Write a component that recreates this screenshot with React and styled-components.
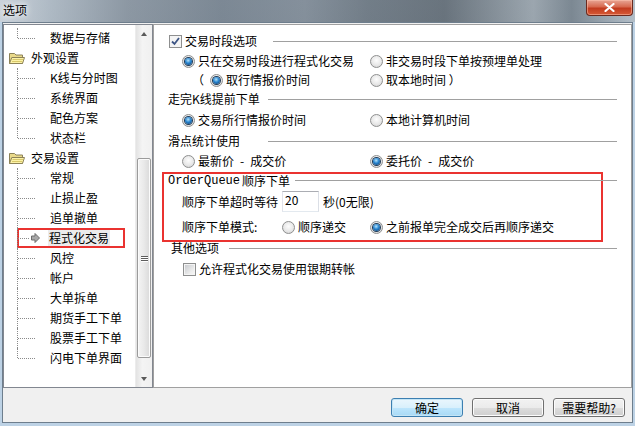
import React from 'react'
import styled, { createGlobalStyle } from 'styled-components'

const GlobalStyle = createGlobalStyle`
  html, body {
    margin: 0;
    padding: 0;
  }
  body {
    font-family: "Noto Sans CJK SC", "Liberation Sans", sans-serif;
    font-size: 12px;
    line-height: 14px;
    color: #000;
  }
`

const treeItems = [
  { label: '数据与存储', last: true },
  { label: '外观设置', folder: true },
  { label: 'K线与分时图' },
  { label: '系统界面' },
  { label: '配色方案' },
  { label: '状态栏', last: true },
  { label: '交易设置', folder: true },
  { label: '常规' },
  { label: '止损止盈' },
  { label: '追单撤单' },
  { label: '程式化交易', selected: true },
  { label: '风控' },
  { label: '帐户' },
  { label: '大单拆单' },
  { label: '期货手工下单' },
  { label: '股票手工下单' },
  { label: '闪电下单界面', last: true },
]

const FolderIcon = () => (
  <svg width="16" height="13" viewBox="0 0 16 13">
    <path d="M0.5 1.5 H5.5 L7 3 H13.5 V11.5 H0.5 Z" fill="#e9d98a" stroke="#8c8258" />
    <path d="M0.5 11.5 L2.8 5.5 H15.5 L13.5 11.5 Z" fill="#fcf2a8" stroke="#8c8258" />
    <path d="M3.5 7.5 H14 M3 9.5 H13.3" stroke="#d8c86a" />
  </svg>
)

const PointerIcon = () => (
  <svg width="9" height="10" viewBox="0 0 9 10">
    <path d="M0.5 3 H4 V0.5 L8.5 5 L4 9.5 V7 H0.5 Z" fill="#a8a8a8" stroke="#6c6c6c" />
  </svg>
)

const CheckMark = () => (
  <svg width="9" height="9" viewBox="0 0 9 9">
    <path d="M1 4.5 L3.5 7 L8 1" fill="none" stroke="#3d5585" strokeWidth="1.8" />
  </svg>
)

const CloseGlyph = () => (
  <svg width="11" height="9" viewBox="0 0 11 9">
    <path d="M1.5 1 L9.5 8 M9.5 1 L1.5 8" stroke="#fff" strokeWidth="2.2" strokeLinecap="round" />
  </svg>
)

const App = () => {
  return (
    <>
      <GlobalStyle />
      <Window>
        <TitleBar>
          <Title>选项</Title>
          <CloseButton>
            <CloseGlyph />
          </CloseButton>
        </TitleBar>
        <Client>
          <Panels>
            <TreePanel>
              <TreeList>
                {treeItems.map((item) =>
                  item.folder ? (
                    <TreeRow key={item.label} $folder>
                      <FolderIcon />
                      <TreeLabel>{item.label}</TreeLabel>
                    </TreeRow>
                  ) : (
                    <TreeRow key={item.label}>
                      <Branch $marked={item.selected}>
                        <Connector $w={item.selected ? 14 : 20} $last={item.last} />
                        {item.selected && <PointerIcon />}
                        <TreeLabel $child $selected={item.selected}>
                          {item.label}
                        </TreeLabel>
                      </Branch>
                    </TreeRow>
                  )
                )}
              </TreeList>
              <ScrollBar>
                <ArrowButton>
                  <Triangle $up />
                </ArrowButton>
                <Track>
                  <Thumb $offset={116} $size={200}>
                    <Grip />
                    <Grip />
                    <Grip />
                  </Thumb>
                </Track>
                <ArrowButton>
                  <Triangle />
                </ArrowButton>
              </ScrollBar>
            </TreePanel>

            <Content>
              <Header $h={20}>
                <HeaderLabel $w={105}>
                  <CheckBox $checked>
                    <CheckMark />
                  </CheckBox>
                  交易时段选项
                </HeaderLabel>
                <Rule />
              </Header>
              <OptionRow $h={20}>
                <Option>
                  <Radio $checked />
                  只在交易时段进行程式化交易
                </Option>
                <Option>
                  <Radio />
                  非交易时段下单按预埋单处理
                </Option>
              </OptionRow>
              <OptionRow $h={18}>
                <Option>
                  <Paren>（</Paren>
                  <Radio $checked />
                  取行情报价时间
                </Option>
                <Option>
                  <Radio />
                  取本地时间 ）
                </Option>
              </OptionRow>

              <Header $h={20}>
                <HeaderLabel $w={100}>走完K线提前下单</HeaderLabel>
                <Rule />
              </Header>
              <OptionRow $h={22}>
                <Option>
                  <Radio $checked />
                  交易所行情报价时间
                </Option>
                <Option>
                  <Radio />
                  本地计算机时间
                </Option>
              </OptionRow>

              <Header $h={20}>
                <HeaderLabel $w={100}>滑点统计使用</HeaderLabel>
                <Rule />
              </Header>
              <OptionRow $h={20}>
                <Option>
                  <Radio />
                  最新价&ensp;-&ensp;成交价
                </Option>
                <Option>
                  <Radio $checked />
                  委托价&ensp;-&ensp;成交价
                </Option>
              </OptionRow>

              <MarkedGroup>
                <Header $h={13}>
                  <HeaderLabel $w={127}>
                    <Mono>OrderQueue</Mono>顺序下单
                  </HeaderLabel>
                  <Rule $overhang={16} />
                </Header>
                <FieldRow $h={29}>
                  顺序下单超时等待
                  <NumberInput defaultValue="20" />
                  秒(0无限)
                </FieldRow>
                <ModeRow $h={22}>
                  <span>顺序下单模式:</span>
                  <Option>
                    <Radio />
                    顺序递交
                  </Option>
                  <Option>
                    <Radio $checked />
                    之前报单完全成交后再顺序递交
                  </Option>
                </ModeRow>
              </MarkedGroup>

              <Header $h={20}>
                <HeaderLabel $w={61} $indent={3}>
                  其他选项
                </HeaderLabel>
                <Rule />
              </Header>
              <FieldRow $h={22}>
                <Option>
                  <CheckBox />
                  允许程式化交易使用银期转帐
                </Option>
              </FieldRow>
            </Content>
          </Panels>

          <Footer>
            <Button $primary>确定</Button>
            <Button>取消</Button>
            <Button>需要帮助?</Button>
          </Footer>
        </Client>
      </Window>
    </>
  )
}

const Window = styled.div`
  width: 635px;
  height: 426px;
  display: flex;
  flex-direction: column;
  overflow: hidden;
  background:
    linear-gradient(to bottom, transparent 22px, #bdd2e5 22px),
    linear-gradient(to bottom, rgba(255, 255, 255, 0.12), rgba(0, 0, 0, 0.08)),
    linear-gradient(
      90deg,
      #c3ccd5 0%,
      #a3b0bc 8%,
      #7d8a97 20%,
      #6a7886 35%,
      #74818e 48%,
      #5f6c78 58%,
      #55616c 70%,
      #8e9aa4 84%,
      #6a7884 90%,
      #a9b6c1 100%
    );
`

const TitleBar = styled.div`
  height: 22px;
  display: flex;
  justify-content: space-between;
  align-items: flex-start;
  padding-left: 3px;
`

const Title = styled.div`
  padding-top: 3px;
  text-shadow: 0 0 5px #fff, 0 0 8px #fff;
`

const CloseButton = styled.div`
  width: 47px;
  height: 16px;
  margin-right: 2px;
  box-sizing: border-box;
  border: 1px solid #6b2a1e;
  border-top: none;
  border-radius: 0 0 4px 4px;
  background: linear-gradient(#e8a695 0%, #d7694f 45%, #c23b1f 55%, #d65a36 100%);
  box-shadow: inset 0 0 0 1px rgba(255, 200, 180, 0.5);
  display: flex;
  align-items: center;
  justify-content: center;
`

const Client = styled.div`
  flex: 1;
  margin: 0 2px 3px 2px;
  border: 1px solid #6e7e8d;
  background: #f0f0f0;
  display: flex;
  flex-direction: column;
`

const Panels = styled.div`
  display: flex;
  height: 364px;
  margin-top: 1px;
`

const TreePanel = styled.div`
  width: 150px;
  box-sizing: border-box;
  border: 1px solid #828790;
  background: #fff;
  display: flex;
`

const TreeList = styled.div`
  flex: 1;
  padding-top: 3px;
  overflow: hidden;
`

const TreeRow = styled.div`
  height: 20px;
  display: flex;
  align-items: center;
  gap: 5px;
  padding-left: ${(p) => (p.$folder ? 5 : 13)}px;
`

const Branch = styled.div`
  display: flex;
  align-items: center;
  align-self: stretch;
  width: ${(p) => (p.$marked ? '108px' : 'auto')};
  outline: ${(p) => (p.$marked ? '2px solid #ea3330' : 'none')};
  outline-offset: -2px;
`

const Connector = styled.span`
  position: relative;
  width: ${(p) => p.$w}px;
  align-self: stretch;
  flex-shrink: 0;
  &::before {
    content: '';
    position: absolute;
    left: 0;
    top: 0;
    height: ${(p) => (p.$last ? '50%' : '100%')};
    border-left: 1px dotted #8a8a8a;
  }
  &::after {
    content: '';
    position: absolute;
    left: 1px;
    top: 50%;
    width: ${(p) => p.$w - 3}px;
    border-top: 1px dotted #8a8a8a;
  }
`

const TreeLabel = styled.span`
  margin-left: ${(p) => (p.$selected ? 8 : p.$child ? 12 : 0)}px;
  padding: 1px 1px;
  background: ${(p) => (p.$selected ? '#ececec' : 'transparent')};
  white-space: nowrap;
`

const ScrollBar = styled.div`
  width: 16px;
  display: flex;
  flex-direction: column;
  background: linear-gradient(90deg, #e3e3e3, #f4f4f4 40%, #f0f0f0);
  border-left: 1px solid #ececec;
`

const ArrowButton = styled.div`
  height: 17px;
  display: flex;
  align-items: center;
  justify-content: center;
`

const Triangle = styled.span`
  width: 0;
  height: 0;
  border-left: 3.5px solid transparent;
  border-right: 3.5px solid transparent;
  ${(p) => (p.$up ? 'border-bottom: 4px solid #5a5a5a;' : 'border-top: 4px solid #5a5a5a;')}
`

const Track = styled.div`
  flex: 1;
  display: flex;
  flex-direction: column;
`

const Thumb = styled.div`
  margin: ${(p) => p.$offset}px 1px 0 1px;
  height: ${(p) => p.$size}px;
  box-sizing: border-box;
  border: 1px solid #9b9b9b;
  border-radius: 2px;
  background: linear-gradient(90deg, #f4f4f4, #e9e9e9 50%, #d9d9d9);
  box-shadow: inset 0 0 0 1px #fbfbfb;
  display: flex;
  flex-direction: column;
  align-items: center;
  justify-content: center;
  gap: 1px;
`

const Grip = styled.span`
  width: 7px;
  height: 1px;
  background: #5d5d5d;
  box-shadow: 0 1px 0 #fff;
`

const Content = styled.div`
  flex: 1;
  box-sizing: border-box;
  border: 1px solid #a0a0a0;
  background: #fff;
  padding: 6px 14px 0 14px;
  display: flex;
  flex-direction: column;
`

const Header = styled.div`
  height: ${(p) => p.$h}px;
  display: flex;
  align-items: center;
`

const HeaderLabel = styled.div`
  width: ${(p) => p.$w}px;
  padding-left: ${(p) => p.$indent || 0}px;
  box-sizing: border-box;
  flex-shrink: 0;
  display: flex;
  align-items: center;
  gap: 3px;
  white-space: nowrap;
`

const Rule = styled.div`
  flex: 1;
  height: 0;
  border-top: 1px solid #a0a0a0;
  margin-right: ${(p) => (p.$overhang ? -p.$overhang : 0)}px;
`

const Mono = styled.span`
  font-family: "Liberation Mono", "DejaVu Sans Mono", monospace;
  margin-right: -1px;
`

const OptionRow = styled.div`
  height: ${(p) => p.$h}px;
  display: grid;
  grid-template-columns: 188px auto;
  align-items: center;
  padding-left: 14px;
`

const Option = styled.div`
  display: flex;
  align-items: center;
  gap: 3px;
  white-space: nowrap;
`

const Paren = styled.span`
  width: 12px;
  margin-left: 10px;
  margin-right: 3px;
`

const Radio = styled.span`
  width: 13px;
  height: 13px;
  box-sizing: border-box;
  flex-shrink: 0;
  border-radius: 50%;
  border: 1px solid #8e8f8f;
  background: radial-gradient(circle at 50% 40%, #fdfdfd 0%, #e8e8e8 55%, #cdcdcd 100%);
  display: flex;
  align-items: center;
  justify-content: center;
  &::after {
    content: '';
    display: ${(p) => (p.$checked ? 'block' : 'none')};
    width: 7px;
    height: 7px;
    border-radius: 50%;
    background: radial-gradient(circle at 45% 35%, #b6e4fb 0%, #2784cf 45%, #0a3566 100%);
    box-shadow: 0 0 0 1px #1f3a56;
  }
`

const CheckBox = styled.span`
  width: 13px;
  height: 13px;
  box-sizing: border-box;
  flex-shrink: 0;
  margin-left: 1px;
  border: 1px solid #8e8f8f;
  background: ${(p) =>
    p.$checked ? '#f4f4f4' : 'linear-gradient(135deg, #c4c7cb 0%, #eeeeee 70%, #f8f8f8 100%)'};
  box-shadow: inset 0 0 0 1px #f4f4f4;
  display: flex;
  align-items: center;
  justify-content: center;
`

const MarkedGroup = styled.div`
  align-self: flex-start;
  width: 441px;
  box-sizing: border-box;
  margin: 1px 0 -4px -6px;
  border: 2px solid #ea3330;
  padding: 0 0 2px 4px;
  display: flex;
  flex-direction: column;
`

const FieldRow = styled.div`
  height: ${(p) => p.$h}px;
  display: flex;
  align-items: center;
  padding-left: 14px;
  white-space: nowrap;
`

const NumberInput = styled.input`
  width: 37px;
  height: 21px;
  box-sizing: border-box;
  margin: 0 4px;
  padding: 0 2px 5px 2px;
  border: 1px solid #abadb3;
  border-left-color: #e2e3ea;
  border-right-color: #dbdfe6;
  border-bottom-color: #e3e9ef;
  font-family: "Noto Sans CJK SC", "Liberation Sans", sans-serif;
  font-size: 12px;
  color: #000;
  outline: none;
`

const ModeRow = styled.div`
  height: ${(p) => p.$h}px;
  display: grid;
  grid-template-columns: 100px 88px auto;
  align-items: center;
  padding-left: 14px;
  white-space: nowrap;
`

const Footer = styled.div`
  flex: 1;
  display: flex;
  justify-content: flex-end;
  align-items: flex-start;
  gap: 9px;
  padding: 10px 7px 0 0;
`

const Button = styled.div`
  width: 72px;
  height: 19px;
  box-sizing: border-box;
  border: 1px solid ${(p) => (p.$primary ? '#3c7fb1' : '#707070')};
  border-radius: 3px;
  background: ${(p) =>
    p.$primary
      ? 'linear-gradient(#eaf6fd 0%, #d9f0fc 50%, #bee6fd 50%, #a7d9f5 100%)'
      : 'linear-gradient(#f2f2f2 0%, #ebebeb 50%, #dddddd 50%, #cfcfcf 100%)'};
  box-shadow: inset 0 0 0 1px ${(p) => (p.$primary ? '#c4e5f6' : '#fcfcfc')};
  display: flex;
  align-items: center;
  justify-content: center;
  line-height: 14px;
`

export default App
